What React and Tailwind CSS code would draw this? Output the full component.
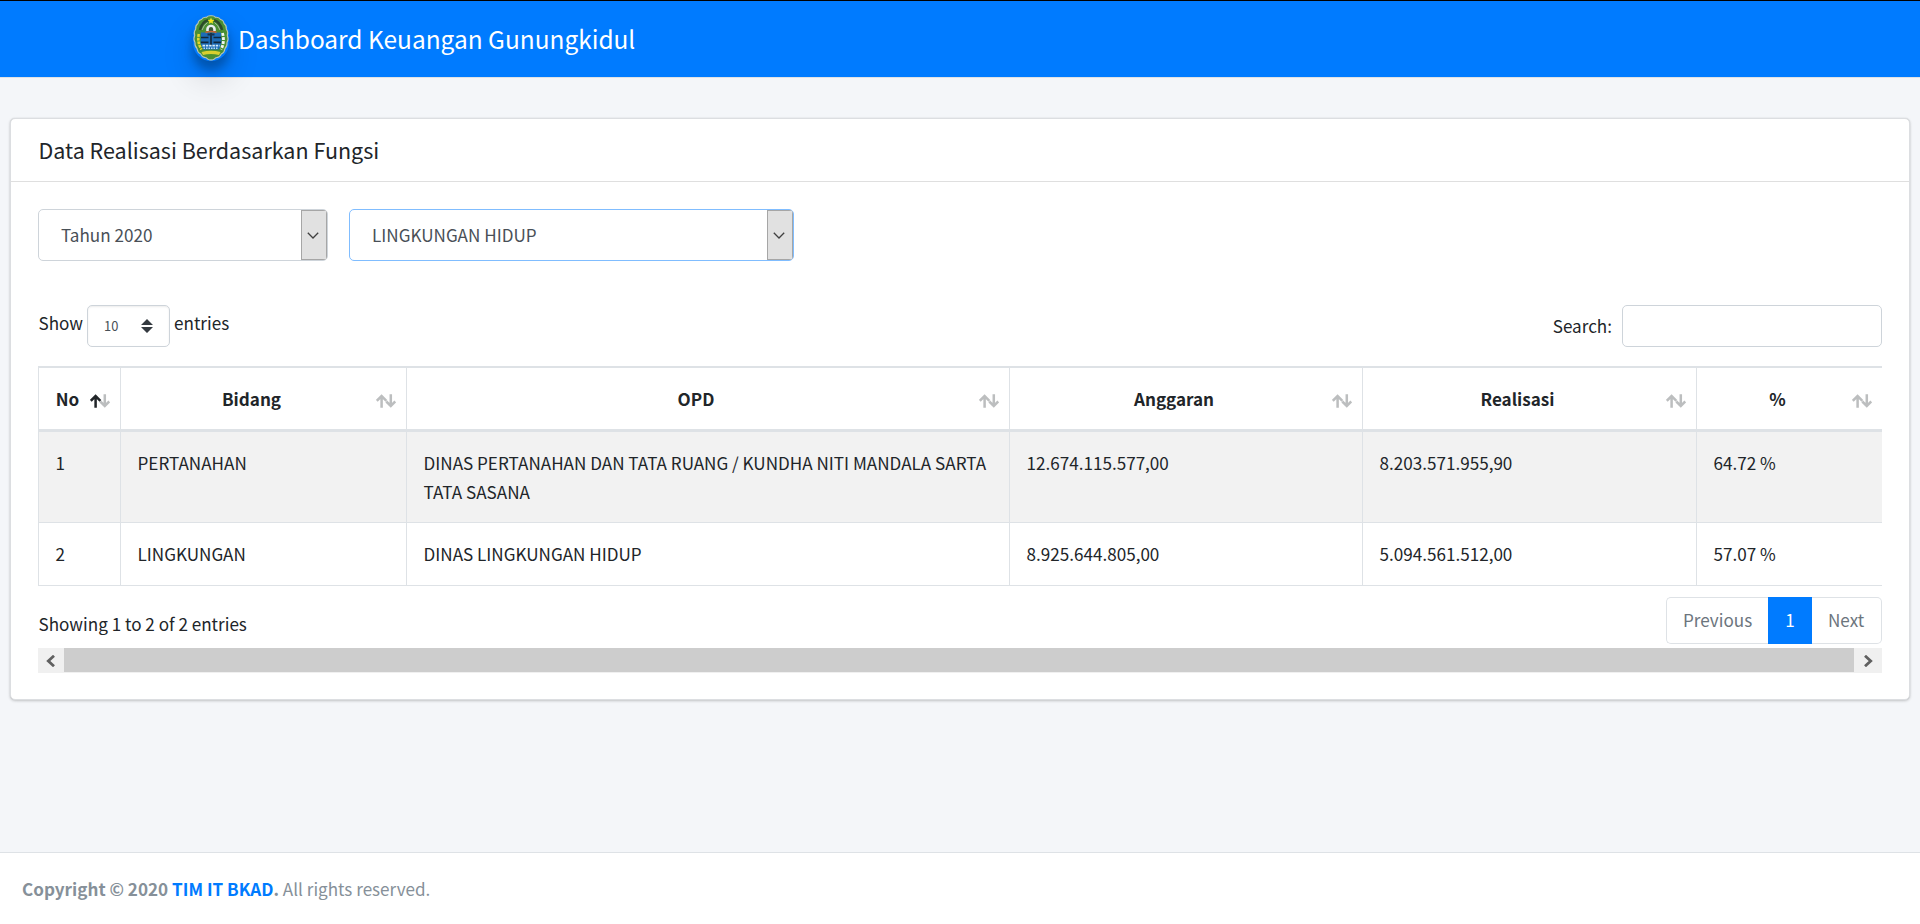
import React from "react";

const COLUMNS = [
  { label: "No", width: "w-[82px]", sorted: true },
  { label: "Bidang", width: "w-[286px]" },
  { label: "OPD", width: "w-[603px]" },
  { label: "Anggaran", width: "w-[353px]" },
  { label: "Realisasi", width: "w-[334px]" },
  { label: "%", width: "w-[186px]" },
];

const ROWS = [
  ["1", "PERTANAHAN", "DINAS PERTANAHAN DAN TATA RUANG / KUNDHA NITI MANDALA SARTA TATA SASANA", "12.674.115.577,00", "8.203.571.955,90", "64.72 %"],
  ["2", "LINGKUNGAN", "DINAS LINGKUNGAN HIDUP", "8.925.644.805,00", "5.094.561.512,00", "57.07 %"],
];

function Emblem() {
  return (
    <svg viewBox="0 0 36 46" className="h-[46px] w-9 shrink-0 overflow-visible">
      <path d="M18 .8 Q21 .4 22.500 2.300 Q26 1.800 27.500 4.500 Q30.500 5 31 8.500 Q33.800 10.500 33.300 14 Q35.600 17 34.300 20.500 Q36 24 34 27.500 Q34.500 31 32 33.500 Q31.500 37.500 28.300 39 Q26.500 42.500 23 42.700 Q20.500 45.600 18 44.800 Q15.500 45.600 13 42.700 Q9.500 42.500 7.700 39 Q4.500 37.500 4 33.500 Q1.500 31 2 27.500 Q0 24 1.700 20.500 Q.4 17 2.700 14 Q2.200 10.500 5 8.500 Q5.500 5 8.500 4.500 Q10 1.800 13.500 2.300 Q15 .4 18 .8Z" fill="#4a8f32" stroke="#b9c6b4" strokeWidth="1.100" />
      <path d="M7 15 Q9 6.500 15 5.200 M21 5.200 Q27 6.500 29 15" fill="none" stroke="#2c4a2a" strokeWidth="2.600" />
      <path d="M9 15 Q11 9.500 14.500 7.500 M21.500 7.500 Q25 9.500 27 15" fill="none" stroke="#b4c0b0" strokeWidth=".9" />
      <path d="M18 2.500 l1 2.200 2.400.2-1.800 1.600.5 2.300-2.100-1.300-2.100 1.300.5-2.300-1.800-1.600 2.400-.2Z" fill="#f5e51b" />
      <path d="M13.200 16 V14 a4.800 4.300 0 0 1 9.600 0 V16Z" fill="#e8eeee" />
      <path d="M15.800 16 V14.200 a2.200 2.200 0 0 1 4.400 0 V16Z" fill="#3a5a34" />
      <path d="M8 17.500 H28 L28.500 28 L26 34.500 H10 L7.500 28Z" fill="#1c6cb8" />
      <path d="M8 22.500 H15.500 M20.500 22.500 H28 M8 27.300 H15.500 M20.500 27.300 H28" stroke="#12283d" strokeWidth="1.700" />
      <path d="M18 18 V30 M14.500 19.500 H21.500" stroke="#16334e" strokeWidth="2" />
      <path d="M12.500 17.500 Q18 15.300 23.500 17.500" fill="none" stroke="#c9633a" strokeWidth="1.500" />
      <path d="M9.500 30.600 H26.500" stroke="#d6ecf8" strokeWidth="1.600" strokeDasharray="2.500 .8" />
      <path d="M10.500 33.200 H25.500" stroke="#b8dcf4" strokeWidth="1.500" strokeDasharray="1.500 1" />
      <path d="M5.800 19 Q4 27 8.500 34.500" fill="none" stroke="#e4d62c" strokeWidth="2.600" strokeDasharray="2.800 .9" />
      <path d="M29.500 18 Q32 27 28 34.500" fill="none" stroke="#f3f6f3" strokeWidth="2.800" strokeDasharray="2.800 1.300" />
      <path d="M8.500 37 Q18 34.500 27.500 37 L26 40 Q18 37.800 10 40Z" fill="#d9cf2e" />
    </svg>
  );
}

function SortIcon({ sorted }) {
  return (
    <svg viewBox="0 0 20 14" className="absolute right-[10px] top-[26px] h-[14px] w-5" fill="none" strokeWidth="2.500">
      <path d="M14.800 .3 V12 M10.300 7.500 L14.800 12 L19.300 7.500" stroke="#bcbebf" />
      <path d="M5.600 13.700 V2 M.8 6.800 L5.600 2 L10.400 6.800" stroke={sorted ? "#212529" : "#bcbebf"} />
    </svg>
  );
}

function NativeSelect({ value, className }) {
  return (
    <div className={`flex h-[52px] overflow-hidden rounded-[5px] border bg-white ${className}`}>
      <div className="flex-1 pl-[22px] leading-[50px] text-[#495057]">{value}</div>
      <div className="flex w-[26px] items-center justify-center border border-[#a6a6a6] bg-[#e1e1e1] pr-[2px]">
        <svg viewBox="0 0 12 7" className="h-[7px] w-3" fill="none" stroke="#404040" strokeWidth="1.300">
          <path d="M.8 .8 L6 6 L11.200 .8" />
        </svg>
      </div>
    </div>
  );
}

export default function App() {
  return (
    <div className="flex h-[924px] w-full flex-col overflow-hidden bg-[#f4f6f9] font-['Noto_Sans_CJK_JP','Noto_Sans_CJK_SC',sans-serif] text-[17.100px] leading-[29px] text-[#212529]">
      <header className="flex h-[78px] shrink-0 items-start border-b border-t border-b-[#dee2e6] border-t-black bg-[#007bff] pl-[192.500px]">
        <div className="mt-[14px] h-[46px] w-9 rounded-full shadow-[0_16px_32px_rgba(0,0,0,.16),0_9px_10px_rgba(0,0,0,.24)]">
          <Emblem />
        </div>
        <span className="ml-[9.500px] mt-[18px] whitespace-nowrap text-[24.450px] leading-[40px] text-white">Dashboard Keuangan Gunungkidul</span>
      </header>

      <main className="flex-1 px-[10px] pt-[40px]">
        <section className="h-[582px] rounded-[5px] border border-[#dcdee1] bg-white shadow-[0_0_1px_rgba(0,0,0,.13),0_1px_3px_rgba(0,0,0,.2)]">
          <div className="h-[63px] border-b border-[#dfdfdf] pl-[27.500px] pt-[15px]">
            <h3 className="text-[21.500px] leading-[32px]">Data Realisasi Berdasarkan Fungsi</h3>
          </div>

          <div className="px-[27px] pt-[27px]">
            <div className="flex gap-[21px]">
              <NativeSelect value="Tahun 2020" className="w-[290px] border-[#ced4da]" />
              <NativeSelect value="LINGKUNGAN HIDUP" className="w-[445px] border-[#80bdff]" />
            </div>

            <div className="mt-[44px] flex h-[42px] justify-between">
              <div className="flex">
                <span className="w-[49px] pl-[.5px] leading-[36px]">Show</span>
                <div className="flex w-[83px] justify-between rounded-[5px] border border-[#ced4da] pl-[16px] pr-[16px] text-[12.900px] text-[#495057] shadow-[inset_0_1px_2px_rgba(0,0,0,.075)]">
                  <span className="leading-[39px]">10</span>
                  <svg viewBox="0 0 12 14" className="mt-[13px] h-[14px] w-3" fill="#343a40">
                    <path d="M0 6 L6 0 L12 6Z M0 8 L6 14 L12 8Z" />
                  </svg>
                </div>
                <span className="ml-[4px] leading-[36px]">entries</span>
              </div>
              <div className="flex">
                <span className="leading-[42px]">Search:</span>
                <div className="ml-[10px] h-[42px] w-[260px] rounded-[5px] border border-[#ced4da] bg-white" />
              </div>
            </div>

            <table className="mt-[19px] w-full table-fixed border-separate border-spacing-0 border-b border-[#dee2e6]">
              <thead>
                <tr className="h-[66px]">
                  {COLUMNS.map((c) => (
                    <th key={c.label} className={`relative border-b-[3px] border-l border-t-2 border-[#dee2e6] pl-[13px] pr-[37px] font-bold ${c.width}`}>
                      {c.label}
                      <SortIcon sorted={c.sorted} />
                    </th>
                  ))}
                </tr>
              </thead>
              <tbody>
                {ROWS.map((row, r) => (
                  <tr key={row[0]} className={r === 0 ? "h-[90px] bg-[#f2f2f2]" : "h-[63px]"}>
                    {row.map((cell, i) => (
                      <td key={i} className={`border-l border-[#dee2e6] px-[16.500px] pt-[16px] align-top ${r === 1 ? "border-t" : ""}`}>
                        {cell}
                      </td>
                    ))}
                  </tr>
                ))}
              </tbody>
            </table>

            <div className="mt-[11px] flex h-[47px] justify-between">
              <span className="pl-[.5px] pt-[12px]">Showing 1 to 2 of 2 entries</span>
              <div className="flex w-[216px] text-[#6c757d] leading-[44px]">
                <span className="w-[102px] rounded-l-[5px] border border-r-0 border-[#dee2e6] pl-[16px]">Previous</span>
                <span className="w-[44px] border-y border-[#007bff] bg-[#007bff] text-center text-white">1</span>
                <span className="w-[70px] rounded-r-[5px] border border-l-0 border-[#dee2e6] pl-[16px]">Next</span>
              </div>
            </div>

            <div className="mt-[4px] flex h-[25px] bg-[#f0f0f0]">
              <div className="flex w-[26px] items-center justify-center pr-px">
                <svg viewBox="0 0 9 12" className="h-3 w-[9px]" fill="none" stroke="#606060" strokeWidth="2.800">
                  <path d="M8 .8 L2.300 6 L8 11.200" />
                </svg>
              </div>
              <div className="h-6 flex-1 bg-[#cdcdcd]" />
              <div className="flex w-[28px] items-center justify-center">
                <svg viewBox="0 0 9 12" className="h-3 w-[9px]" fill="none" stroke="#606060" strokeWidth="2.800">
                  <path d="M1 .8 L6.700 6 L1 11.200" />
                </svg>
              </div>
            </div>
          </div>
        </section>
      </main>

      <footer className="h-[72px] shrink-0 border-t border-[#dee2e6] bg-white pl-[22px] pt-[21px] text-[#869099]">
        <strong className="font-bold">
          Copyright © 2020 <a className="text-[#007bff]">TIM IT BKAD</a>.
        </strong>{" "}
        All rights reserved.
      </footer>
    </div>
  );
}
